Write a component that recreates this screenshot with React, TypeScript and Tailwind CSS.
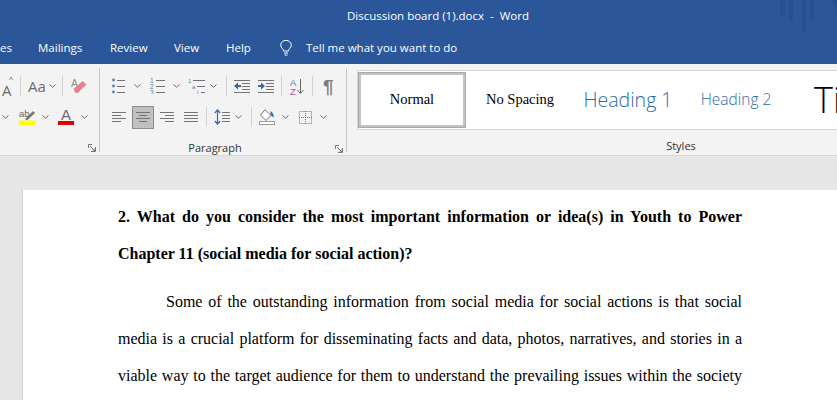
const stroke = "#737373";

function Chevron({ className = "" }: { className?: string }) {
	return (
		<svg className={`shrink-0 ${className}`} width="7" height="4" viewBox="0 0 7 4" fill="none">
			<path d="M0.5 0.5 L3.5 3.2 L6.5 0.5" stroke="#666" strokeWidth="1" />
		</svg>
	);
}

function Sep({ className = "" }: { className?: string }) {
	return <div className={`w-px h-[20px] bg-[#d2d2d2] shrink-0 ${className}`} />;
}

function Lines({ w, rows, className = "" }: { w: number; rows: [number, number, number][]; className?: string }) {
	return (
		<svg className={`shrink-0 ${className}`} width={w} height="14" viewBox={`0 0 ${w} 14`}>
			{rows.map(([x1, x2, y]) => (
				<path key={y} d={`M${x1} ${y + 0.5} H${x2}`} stroke={stroke} strokeWidth="1" />
			))}
		</svg>
	);
}

function Bullets({ className = "" }: { className?: string }) {
	return (
		<svg className={`shrink-0 ${className}`} width="13" height="16" viewBox="0 0 13 16">
			{[2, 8, 14].map((y) => (
				<g key={y}>
					<circle cx="1.5" cy={y} r="1.4" fill="#4f81b5" />
					<path d={`M5 ${y + 0.5} H13`} stroke={stroke} />
				</g>
			))}
		</svg>
	);
}

function Numbering({ className = "" }: { className?: string }) {
	return (
		<svg className={`shrink-0 ${className}`} width="15" height="16" viewBox="0 0 15 16">
			{[2, 8, 14].map((y, i) => (
				<g key={y}>
					<text x="0" y={y + 2.5} fontSize="6.5" fill="#4f7fb0" fontFamily="Liberation Sans, sans-serif">
						{i + 1}
					</text>
					<path d={`M6 ${y + 0.5} H15`} stroke={stroke} />
				</g>
			))}
		</svg>
	);
}

function MultiLevel({ className = "" }: { className?: string }) {
	return (
		<svg className={`shrink-0 ${className}`} width="19" height="16" viewBox="0 0 19 16">
			<text x="0" y="5" fontSize="6" fill="#4f7fb0" fontFamily="Liberation Sans, sans-serif">1</text>
			<path d="M5 2.5 H17" stroke={stroke} />
			<text x="4" y="11" fontSize="6" fill="#4f7fb0" fontFamily="Liberation Sans, sans-serif">a</text>
			<path d="M9 8.5 H17" stroke={stroke} />
			<text x="9" y="16" fontSize="6" fill="#4f7fb0" fontFamily="Liberation Sans, sans-serif">i</text>
			<path d="M13 14.5 H17" stroke={stroke} />
		</svg>
	);
}

function Indent({ flip = false, className = "" }: { flip?: boolean; className?: string }) {
	return (
		<svg className={`shrink-0 ${className}`} width="16" height="14" viewBox="0 0 16 14">
			<path d="M0 1.5 H16 M8 4.5 H16 M8 7.5 H16 M8 10.5 H16 M0 13.5 H16" stroke={stroke} />
			{flip ? (
				<path d="M0 6 H3 V3.5 L7 7 L3 10.5 V8 H0 Z" fill="#2f6ca8" />
			) : (
				<path d="M7 6 H4 V3.5 L0 7 L4 10.5 V8 H7 Z" fill="#2f6ca8" />
			)}
		</svg>
	);
}

function Sort({ className = "" }: { className?: string }) {
	return (
		<svg className={`shrink-0 ${className}`} width="14" height="17" viewBox="0 0 14 17">
			<text x="0" y="7.5" fontSize="9.5" fill="#4f7fb0" fontFamily="Liberation Sans, sans-serif">A</text>
			<text x="0" y="16.5" fontSize="9.5" fill="#a05ca8" fontFamily="Liberation Sans, sans-serif">Z</text>
			<path d="M10.5 1 V15 M7.5 12 L10.5 15.5 L13.5 12" stroke="#666" fill="none" />
		</svg>
	);
}

function Pilcrow({ className = "" }: { className?: string }) {
	return (
		<span className={`shrink-0 w-[10px] font-['Liberation_Sans',sans-serif] font-bold text-[19px] leading-none text-[#7d7d7d] ${className}`}>
			¶
		</span>
	);
}

function LineSpacing({ className = "" }: { className?: string }) {
	return (
		<svg className={`shrink-0 ${className}`} width="16" height="16" viewBox="0 0 16 16">
			<path d="M3.5 1 V15 M0.8 4 L3.5 1 L6.2 4 M0.8 12 L3.5 15 L6.2 12" stroke="#2f6ca8" strokeWidth="1.2" fill="none" />
			<path d="M8 3.5 H16 M8 6.5 H16 M8 9.5 H16 M8 12.5 H16" stroke={stroke} />
		</svg>
	);
}

function Shading({ className = "" }: { className?: string }) {
	return (
		<svg className={`shrink-0 ${className}`} width="16" height="16" viewBox="0 0 16 16">
			<path d="M6 0.8 L12 6.5 L7 11.5 L1.5 6 Z" fill="#fff" stroke="#777" />
			<path d="M11.5 2 Q15.5 5 14.5 8.5 L11.5 6 Z" fill="#2f6ca8" />
			<rect x="0.5" y="12.5" width="15" height="3" fill="#fff" stroke="#999" />
		</svg>
	);
}

function Borders({ className = "" }: { className?: string }) {
	return (
		<svg className={`shrink-0 ${className}`} width="13" height="13" viewBox="0 0 13 13">
			<rect x="0.5" y="0.5" width="12" height="12" fill="none" stroke="#777" strokeDasharray="1 1" />
			<path d="M6.5 0 V13 M0 6.5 H13" stroke="#777" strokeDasharray="1 1" />
		</svg>
	);
}

function Eraser({ className = "" }: { className?: string }) {
	return (
		<svg className={`shrink-0 ${className}`} width="16" height="16" viewBox="0 0 16 16">
			<text x="0" y="8.5" fontSize="10.5" fill="#8a8a8a" fontFamily="Liberation Sans, sans-serif">A</text>
			<path d="M2.5 11 L11.5 3 L15.5 6.5 L6.5 15 L4.5 15 Z" fill="#e8808f" />
		</svg>
	);
}

function Highlight({ className = "" }: { className?: string }) {
	return (
		<svg className={`shrink-0 ${className}`} width="17" height="16" viewBox="0 0 17 16">
			<text x="0" y="8" fontSize="9.5" fill="#666" fontFamily="Liberation Sans, sans-serif">ab</text>
			<path d="M6 10 L14 2 L16 4 L8 11.5 Z" fill="#777" />
			<rect x="0" y="11.5" width="17" height="4.5" fill="#ffff00" />
		</svg>
	);
}

function FontColor({ className = "" }: { className?: string }) {
	return (
		<div className={`shrink-0 w-[16px] h-[16px] flex flex-col items-center ${className}`}>
			<span className="font-['Liberation_Sans',sans-serif] text-[15px] leading-[12px] text-[#6b6b6b]">A</span>
			<div className="w-[16px] h-[4px] bg-[#e00000]" />
		</div>
	);
}

function Launcher({ className = "" }: { className?: string }) {
	return (
		<svg className={`shrink-0 ${className}`} width="8" height="8" viewBox="0 0 8 8" fill="none">
			<path d="M7.5 3 V7.5 H3 M0.5 0.5 H4 M0.5 0.5 V4 M2 2 L7 7 M7 4.5 V7 H4.5" stroke="#777" />
		</svg>
	);
}

function FontGroup() {
	return (
		<div className="w-[99px] shrink-0 flex flex-col">
			<div className="h-[34px] mt-[1px] flex items-center">
				<div className="relative w-[13px] shrink-0 h-[16px]">
					<span className="pl-[2px] font-['Open_Sans',sans-serif] text-[15px] leading-[16px] text-[#6b6b6b]">A</span>
					<span className="absolute right-[0px] top-[-2px] text-[7px] text-[#555] leading-none">^</span>
				</div>
				<Sep className="ml-[7px]" />
				<span className="ml-[7px] w-[17px] font-['Open_Sans',sans-serif] text-[15px] leading-none text-[#6b6b6b]">Aa</span>
				<Chevron className="ml-[4px]" />
				<Sep className="ml-[6px]" />
				<Eraser className="ml-[8px]" />
			</div>
			<div className="h-[28px] flex items-center">
				<Chevron className="ml-[2px]" />
				<Highlight className="ml-[10px]" />
				<Chevron className="ml-[6px]" />
				<FontColor className="ml-[9px]" />
				<Chevron className="ml-[7px]" />
			</div>
			<div className="flex justify-end pr-[3px] mt-[13px]">
				<Launcher />
			</div>
		</div>
	);
}

function ParagraphGroup() {
	return (
		<div className="w-[246px] shrink-0 flex flex-col">
			<div className="h-[34px] mt-[1px] flex items-center">
				<Bullets className="ml-[12px]" />
				<Chevron className="ml-[9px]" />
				<Numbering className="ml-[9px]" />
				<Chevron className="ml-[8px]" />
				<MultiLevel className="ml-[8px]" />
				<Chevron className="ml-[3px]" />
				<Sep className="ml-[9px]" />
				<Indent className="ml-[7px]" />
				<Indent flip className="ml-[8px]" />
				<Sep className="ml-[7px]" />
				<Sort className="ml-[8px]" />
				<Sep className="ml-[8px]" />
				<Pilcrow className="ml-[10px]" />
			</div>
			<div className="h-[28px] flex items-center">
				<Lines className="ml-[12px]" w={14} rows={[[0, 14, 2], [0, 9, 5], [0, 14, 8], [0, 9, 11]]} />
				<div className="ml-[6px] w-[22px] h-[23px] shrink-0 bg-[#c0c0c0] border border-[#8c8c8c] flex items-center justify-center">
					<Lines w={14} rows={[[0, 14, 2], [3, 11, 5], [0, 14, 8], [3, 11, 11]]} />
				</div>
				<Lines className="ml-[6px]" w={14} rows={[[0, 14, 2], [5, 14, 5], [0, 14, 8], [5, 14, 11]]} />
				<Lines className="ml-[10px]" w={14} rows={[[0, 14, 2], [0, 14, 5], [0, 14, 8], [0, 14, 11]]} />
				<Sep className="ml-[8px]" />
				<LineSpacing className="ml-[7px]" />
				<Chevron className="ml-[5px]" />
				<Sep className="ml-[9px]" />
				<Shading className="ml-[7px]" />
				<Chevron className="ml-[7px]" />
				<Borders className="ml-[10px]" />
				<Chevron className="ml-[8px]" />
			</div>
			<div className="relative mt-[8px] h-[18px] flex items-center justify-center pr-[16px] font-['Open_Sans',sans-serif] text-[11px] text-[#333]">
				<span>Paragraph</span>
				<Launcher className="absolute right-[3px] top-[6px]" />
			</div>
		</div>
	);
}

function StylesGroup() {
	return (
		<div className="flex-1 min-w-0 flex flex-col pl-[10px]">
			<div className="h-[60px] mt-[2px] shrink-0 bg-white border-y border-l border-[#d4d4d4] flex items-center overflow-hidden">
				<div className="w-[108px] h-[56px] shrink-0 border-[3px] border-[#c4c4c4] outline outline-1 outline-[#a8a8a8] -outline-offset-1 flex items-center justify-center font-['Liberation_Serif',serif] text-[14.5px] text-black">
					Normal
				</div>
				<div className="w-[108px] shrink-0 text-center font-['Liberation_Serif',serif] text-[14.5px] text-black">No Spacing</div>
				<div className="w-[108px] shrink-0 text-center font-['Open_Sans',sans-serif] font-light text-[19.5px] text-[#2a6aa8]">Heading 1</div>
				<div className="w-[108px] shrink-0 text-center font-['Open_Sans',sans-serif] font-light text-[15.5px] text-[#2a6aa8]">Heading 2</div>
				<div className="ml-[24px] shrink-0 font-['Open_Sans',sans-serif] font-light text-[36px] text-black">Title</div>
			</div>
			<div className="mt-[7px] h-[18px] flex items-center justify-center font-['Open_Sans',sans-serif] text-[11px] text-[#333] pl-[168px]">
				Styles
			</div>
		</div>
	);
}

function TitleBar() {
	return (
		<div className="relative h-[64px] shrink-0 bg-[#2b579a] text-white font-['Open_Sans',sans-serif] text-[11.5px]">
			<svg className="absolute left-[780px] top-0" width="57" height="32" viewBox="0 0 57 32" fill="#26508f">
				<rect x="0" y="0" width="5" height="15" />
				<rect x="9" y="0" width="4" height="22" />
				<rect x="22" y="0" width="4" height="32" />
				<rect x="30" y="0" width="4" height="19" />
				<path d="M52 0 H57 V12 Z" />
			</svg>
			<div className="h-[32px] flex items-center justify-center pl-[39px] whitespace-pre">Discussion board (1).docx  -  Word</div>
			<div className="h-[32px] flex items-center whitespace-nowrap">
				<span className="w-[38px]">es</span>
				<span className="w-[72px]">Mailings</span>
				<span className="w-[64px]">Review</span>
				<span className="w-[52px]">View</span>
				<span className="w-[54px]">Help</span>
				<svg width="12" height="16" viewBox="0 0 12 16" fill="none" stroke="#fff" strokeWidth="1">
					<path d="M3.5 11 C3.5 8.5 0.7 8 0.7 5.3 A5.3 5 0 0 1 11.3 5.3 C11.3 8 8.5 8.5 8.5 11 Z M4 13 H8 M4.5 15 H7.5" />
				</svg>
				<span className="ml-[14px]">Tell me what you want to do</span>
			</div>
		</div>
	);
}

function JustLine({ children, className = "" }: { children: React.ReactNode; className?: string }) {
	return <div className={`h-[37px] leading-[37px] text-justify [text-align-last:justify] whitespace-normal ${className}`}>{children}</div>;
}

export default function App() {
	return (
		<div className="w-[837px] h-[400px] overflow-hidden flex flex-col bg-[#e6e6e6]">
			<TitleBar />
			<div className="h-[92px] shrink-0 bg-[#f3f3f3] border-b border-[#d6d6d6] pt-[4px] flex items-start">
				<FontGroup />
				<div className="w-px h-[84px] bg-[#c6c6c6] shrink-0" />
				<ParagraphGroup />
				<div className="w-px h-[84px] bg-[#c6c6c6] shrink-0" />
				<StylesGroup />
			</div>
			<div className="flex-1 pt-[34px] pl-[22px]">
				<div className="h-full bg-white border-l border-[#d0d0d0] pl-[95px] pt-[8px] font-['Liberation_Serif',serif] text-[16px] text-black">
					<div className="w-[624px]">
						<JustLine className="font-bold">
							2. What do you consider the most important information or idea(s) in Youth to Power
						</JustLine>
						<div className="h-[37px] leading-[37px] font-bold">Chapter 11 (social media for social action)?</div>
						<JustLine className="mt-[11px] indent-[48px]">
							Some of the outstanding information from social media for social actions is that social
						</JustLine>
						<JustLine>media is a crucial platform for disseminating facts and data, photos, narratives, and stories in a</JustLine>
						<JustLine>viable way to the target audience for them to understand the prevailing issues within the society</JustLine>
					</div>
				</div>
			</div>
		</div>
	);
}
